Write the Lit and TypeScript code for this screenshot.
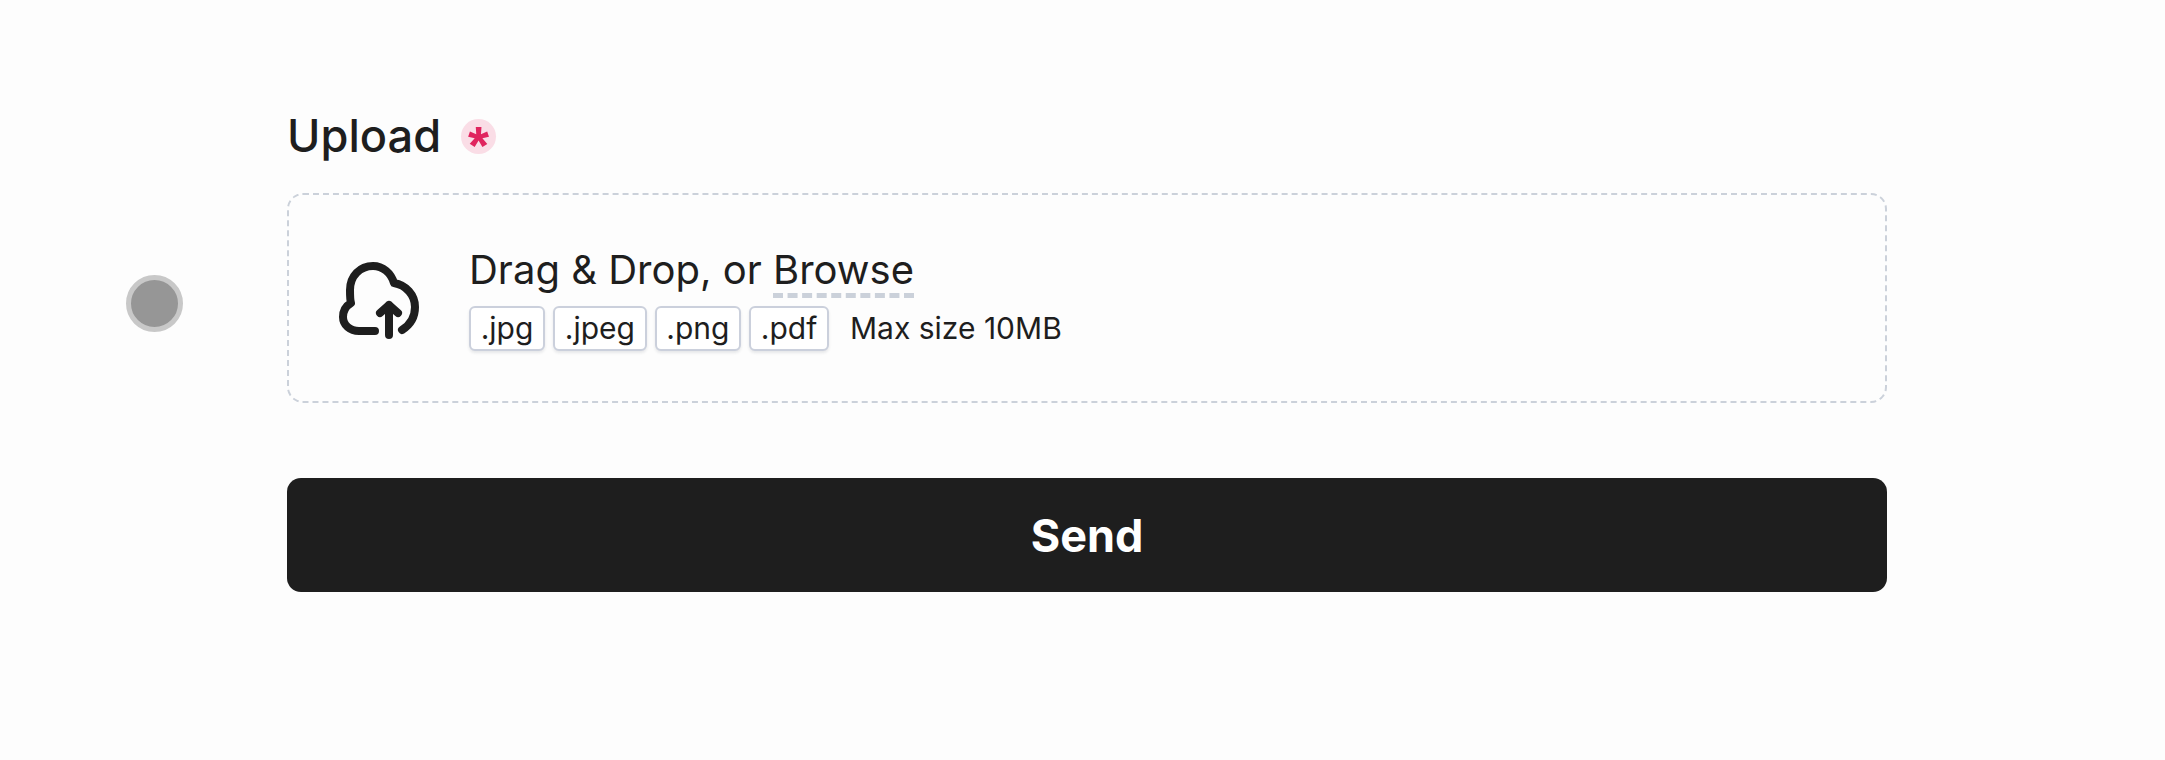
import { LitElement, html, css } from "lit";
import { customElement } from "lit/decorators.js";

@customElement("app-root")
export class AppRoot extends LitElement {
  static styles = css`
    :host {
      display: block;
      position: relative;
      height: 760px;
      background: #fdfdfd;
      font-family: Inter, "Liberation Sans", sans-serif;
      color: #1e1e1e;
    }
    .form {
      width: 1600px;
      margin-left: 287px;
      padding-top: 110px;
      display: flex;
      flex-direction: column;
    }
    .label {
      display: flex;
      align-items: center;
      gap: 20px;
      height: 52px;
      font-size: 45.2px;
      font-weight: 450;
      line-height: 52px;
      margin-bottom: 31px;
    }
    .req {
      box-sizing: border-box;
      width: 35px;
      height: 35px;
      padding-top: 9px;
      border-radius: 50%;
      background: #fadde6;
      color: #e0245e;
      font-family: "Liberation Sans", sans-serif;
      font-size: 54px;
      font-weight: 700;
      line-height: 35px;
      text-align: center;
    }
    .drop {
      box-sizing: border-box;
      height: 210px;
      border: 2px dashed #cbd1da;
      border-radius: 16px;
      display: flex;
      align-items: center;
      gap: 44px;
      padding-left: 46px;
    }
    .icon {
      width: 90px;
      height: 84px;
      display: block;
      flex: none;
    }
    .text {
      display: flex;
      flex-direction: column;
      gap: 8px;
      align-items: flex-start;
    }
    .title {
      font-size: 40px;
      line-height: 48px;
    }
    .browse {
      display: inline-block;
      border-bottom: 5px dashed #cbd1da;
      line-height: 46px;
    }
    .meta {
      display: flex;
      align-items: center;
      gap: 8px;
      font-size: 30px;
      line-height: 40px;
    }
    .tag {
      box-sizing: border-box;
      height: 45px;
      padding: 0 9.7px 0;
      border: 2px solid #cbd0dc;
      border-radius: 6px;
      box-shadow: 0 2px 3px rgba(30, 40, 60, 0.1);
      display: flex;
      align-items: center;
      background: #fff;
    }
    .size {
      margin-left: 13px;
    }
    .send {
      margin-top: 75px;
      height: 114px;
      border: none;
      border-radius: 14px;
      background: #1e1e1e;
      color: #fff;
      font: 700 45px Inter, "Liberation Sans", sans-serif;
    }
    .dot {
      position: absolute;
      left: 126px;
      top: 275px;
      width: 57px;
      height: 57px;
      box-sizing: border-box;
      border: 5px solid #c8c8c8;
      border-radius: 50%;
      background: #969696;
    }
  `;

  render() {
    return html`
      <div class="dot"></div>
      <form class="form" @submit=${(e: Event) => e.preventDefault()}>
        <div class="label">
          <span>Upload</span>
          <span class="req">*</span>
        </div>
        <div class="drop">
          <svg class="icon" viewBox="235 16 90 84" fill="none" stroke="#1e1e1e" stroke-width="8" stroke-linecap="round" stroke-linejoin="round">
            <path d="M275 91H259C250 91 243 85 243 77C243 71 246 66 251 63C250 60 250 55 250 50C250 36 260 26 273 26C283 26 291 33 294 43C306 45 315 55 315 67C315 77 310 85 302 90" />
            <path d="M289 95V65M280 73L289 65L298 73" />
          </svg>
          <div class="text">
            <div class="title">Drag &amp; Drop, or <span class="browse">Browse</span></div>
            <div class="meta">
              <span class="tag">.jpg</span>
              <span class="tag">.jpeg</span>
              <span class="tag">.png</span>
              <span class="tag">.pdf</span>
              <span class="size">Max size 10MB</span>
            </div>
          </div>
        </div>
        <button class="send" type="button">Send</button>
      </form>
    `;
  }
}
